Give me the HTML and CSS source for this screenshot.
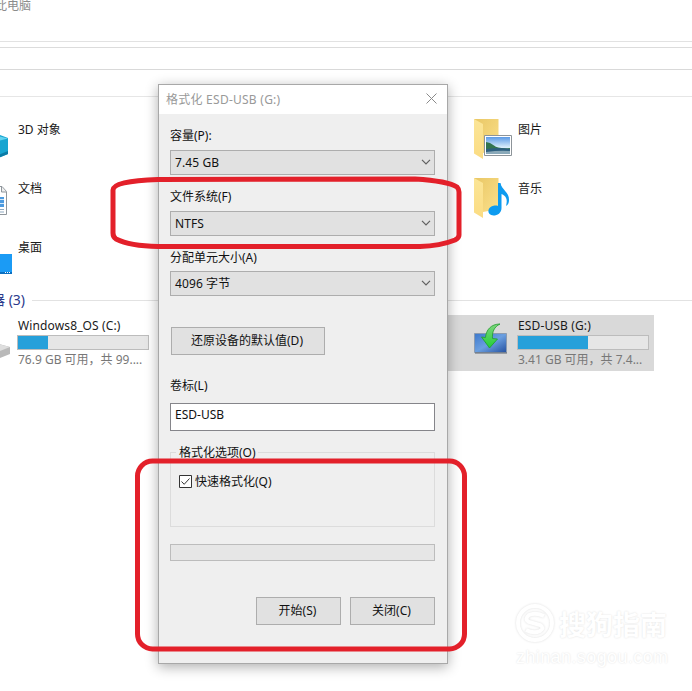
FILE: index.html
```html
<!DOCTYPE html>
<html lang="zh-CN">
<head>
    <meta charset="UTF-8">
    <meta name="viewport" content="width=device-width, initial-scale=1.0">
    <title>此电脑</title>
    <link rel="stylesheet" href="styles.css">
</head>
<body>

<div class="explorer">
    <header class="title-bar">此电脑</header>
    <div class="ribbon"></div>
    <div class="address-bar"></div>
    <div class="group-line"></div>

    <div class="tiles folders">
        <div class="tile">
            <svg class="icon" viewBox="0 0 38 42">
                <path d="M10 18 26 17 34 20 34 36 24 40 10 38z" fill="#17a5d1"/>
                <path d="M20 17 34 20.500 24 23 10 21z" fill="#63d3ef"/>
                <path d="M24 37 34 33 34 36 24 40z" fill="#0b7ba6"/>
            </svg>
            <span class="name">3D 对象</span>
        </div>
        <div class="tile">
            <svg class="icon" viewBox="0 0 38 42">
                <path d="M5.500 9.500H28l4.500 5V37.500h-27z" fill="#fff" stroke="#8f969c"/>
                <path d="M27.500 10v5h5" fill="#eee" stroke="#8f969c"/>
                <path d="M18 17.500h8M18 32.500h12M18 35h12" stroke="#8fa9c0"/>
                <path d="M18 20h12v10H18z" fill="#4d9be0"/>
                <path d="M18 22.500h12M18 26.500h12" stroke="#d5e9fa"/>
            </svg>
            <span class="name">文档</span>
        </div>
        <div class="tile">
            <svg class="icon" viewBox="0 0 38 42">
                <path d="M0 18h38v20H0z" fill="#1b9bf5"/>
                <path d="M0 36h38v2H0z" fill="#0a6fc0"/>
                <path d="M31 36.500h5" stroke="#fff" stroke-dasharray="1 1"/>
            </svg>
            <span class="name">桌面</span>
        </div>
        <div class="tile">
            <svg class="icon" viewBox="0 0 38 42">
                <path d="M0 1h24.500v31L9 35z" fill="url(#folderBack)"/>
                <path d="M0 1 9 6V41L0 35.500z" fill="url(#folderFront)"/>
                <path d="M10.500 17.500h27v20h-27z" fill="#fff" stroke="#8d9499"/>
                <path d="M12 19h24v17H12z" fill="url(#sky)"/>
                <path d="M12 24q4 0 8 3.500t16 2.500v2H12z" fill="#32744f"/>
                <path d="M12 31q14-2 24 0v5H12z" fill="#2d5f7e"/>
                <path d="M12 34q14-2 24-1v3H12z" fill="#8aa9b9"/>
            </svg>
            <span class="name">图片</span>
        </div>
        <div class="tile">
            <svg class="icon" viewBox="0 0 38 42">
                <path d="M0 1h24.500v31L9 35z" fill="url(#folderBack)"/>
                <path d="M0 1 9 6V41L0 35.500z" fill="url(#folderFront)"/>
                <path d="M24 6h2.500c1 7 9 9 8.500 17 0 3-1 5-3 6 2-7 0-10-4.500-12v14c0 5-4 7.500-8 7.500-7 0-7-9 1-10 2 0 3 0 3.500.5z" fill="#0d9bf0"/>
            </svg>
            <span class="name">音乐</span>
        </div>
    </div>

    <h2 class="group-title"><span>设备和驱动器 (3)</span></h2>

    <div class="tiles drives">
        <div class="tile">
            <svg class="icon" viewBox="0 0 38 42">
                <path d="M0 22 22 20 36 24 36 31 14 40 0 36z" fill="#b9b9b9"/>
                <path d="M0 22 20 20 36 24 16 32 0 28z" fill="#dedede"/>
            </svg>
            <div class="drive">
                <span class="name">Windows8_OS (C:)</span>
                <div class="usage"><div class="used" style="width: 23%"></div></div>
                <span class="free">76.9 GB 可用，共 99....</span>
            </div>
        </div>
        <div class="tile selected">
            <svg class="icon" viewBox="0 0 38 42">
                <path d="M.5 10.500h32v19H.5z" fill="url(#screen)" stroke="#8b9bb0"/>
                <path d="M1 30h32" stroke="#5c6470"/>
                <path d="M26 1C17 1 12 7 11.500 14.500L7.500 14 15.500 25 23.500 16 18.500 15.500C18 9 20 4 26 1z" fill="url(#arrow)" stroke="#1f9a2c" stroke-width=".8"/>
            </svg>
            <div class="drive">
                <span class="name">ESD-USB (G:)</span>
                <div class="usage"><div class="used" style="width: 54%"></div></div>
                <span class="free">3.41 GB 可用，共 7.4...</span>
            </div>
        </div>
    </div>
</div>

<div class="dialog">
    <div class="dialog-title">
        <span>格式化 ESD-USB (G:)</span>
        <svg class="close" viewBox="0 0 11 11"><path d="M.5.5l10 10M10.500.5l-10 10"/></svg>
    </div>
    <div class="dialog-body">
        <label>容量(P):</label>
        <div class="select"><span>7.45 GB</span><svg viewBox="0 0 10 6"><path d="M1 .8l4 4 4-4"/></svg></div>
        <label>文件系统(F)</label>
        <div class="select"><span>NTFS</span><svg viewBox="0 0 10 6"><path d="M1 .8l4 4 4-4"/></svg></div>
        <label>分配单元大小(A)</label>
        <div class="select"><span>4096 字节</span><svg viewBox="0 0 10 6"><path d="M1 .8l4 4 4-4"/></svg></div>
        <button class="btn restore">还原设备的默认值(D)</button>
        <label>卷标(L)</label>
        <div class="text-input">ESD-USB</div>
        <div class="options">
            <div class="legend">格式化选项(O)</div>
            <div class="check">
                <svg viewBox="0 0 13 13"><path d="M.5.5h12v12H.5z" fill="#fff"/><path d="M2.500 6.500l2.700 2.800 5.300-5.800" fill="none"/></svg>
                <span>快速格式化(Q)</span>
            </div>
        </div>
        <div class="progress"></div>
        <div class="actions">
            <button class="btn">开始(S)</button>
            <button class="btn">关闭(C)</button>
        </div>
    </div>
</div>

<!-- red marker strokes -->
<svg class="marks" viewBox="0 0 692 691">
    <path d="M113 190Q113 181 158 179.500L415 179Q448 181 457 187Q459 189 459 192V235Q459 238 455 240Q440 246 420 246.500H158Q130 246 116 239Q113 237 113 233z"/>
    <rect x="137.500" y="461" width="327" height="188" rx="15"/>
</svg>

<div class="watermark">
    <div class="brand">
        <svg viewBox="0 0 40 40">
            <circle cx="20" cy="20" r="17"/>
            <path d="M29 13q-9-4-15-1-5 4 0 7l11 3q5 3 0 6-6 3-14-1"/>
        </svg>
        <span>搜狗指南</span>
    </div>
    <div class="site">zhinan.sogou.com</div>
</div>

<svg class="defs">
    <defs>
        <linearGradient id="folderBack" x1="0" y1="0" x2="1" y2="1">
            <stop offset="0" stop-color="#e9c765"/><stop offset="1" stop-color="#fbe08b"/>
        </linearGradient>
        <linearGradient id="folderFront" x1="0" y1="0" x2="0" y2="1">
            <stop offset="0" stop-color="#fbe597"/><stop offset="1" stop-color="#fbdc83"/>
        </linearGradient>
        <linearGradient id="sky" x1="0" y1="0" x2="0" y2="1">
            <stop offset="0" stop-color="#5b9ae6"/><stop offset=".6" stop-color="#d8ecfa"/>
        </linearGradient>
        <linearGradient id="screen" x1="0" y1="0" x2="1" y2="1">
            <stop offset="0" stop-color="#3c78cc"/><stop offset=".5" stop-color="#6b9fe0"/><stop offset="1" stop-color="#2450a0"/>
        </linearGradient>
        <linearGradient id="arrow" x1="0" y1="0" x2="0" y2="1">
            <stop offset="0" stop-color="#7fd67f"/><stop offset="1" stop-color="#20cf35"/>
        </linearGradient>
    </defs>
</svg>

</body>
</html>
```
FILE: styles.css
```css
* {
    box-sizing: border-box;
}
body {
    margin: 0;
    height: 691px;
    position: relative;
    overflow: hidden;
    background-color: #fff;
    color: #1a1a1a;
    font-family: "Noto Sans", "Noto Sans CJK SC", sans-serif;
    font-size: 12px;
}
.explorer {
    width: 692px;
    overflow: hidden;
}
.title-bar {
    height: 42px;
    margin-left: -5px;
    line-height: 11px;
    color: #8c8c8c;
    border-bottom: 1px solid #e2e2e2;
}
.ribbon {
    height: 6px;
    border-bottom: 1px solid #dcdcdc;
}
.address-bar {
    height: 22px;
    border-bottom: 1px solid #d9d9d9;
}
.group-line {
    height: 27px;
    border-bottom: 1px solid #e6e6e6;
}
.tiles {
    display: grid;
    grid-template-columns: 214px 214px;
    column-gap: 286px;
    margin-left: -60px;
}
.folders {
    grid-template-rows: repeat(3, 59px);
    grid-auto-flow: column;
    padding-top: 12px;
}
.tile {
    display: flex;
    gap: 6px;
    padding: 9px 0 0 34px;
}
.icon {
    width: 38px;
    height: 42px;
    flex: none;
}
.name {
    line-height: 20px;
    white-space: nowrap;
}
.folders .name {
    line-height: 23px;
}
.group-title {
    display: flex;
    align-items: center;
    gap: 7px;
    height: 29px;
    margin: 0 0 0 -79px;
    font-size: 14px;
    font-weight: normal;
    color: #2b3a8c;
    white-space: nowrap;
}
.group-title span {
    padding-bottom: 4px;
}
.group-title::after {
    content: "";
    flex: 1;
    height: 1px;
    background-color: #e2e2e2;
}
.drives .tile {
    height: 56px;
    padding-top: 0;
}
.drives .icon {
    margin-top: 8px;
}
.selected {
    background-color: #d9d9d9;
}
.drive {
    width: 131px;
}
.drive .name,
.drive .free {
    display: block;
    height: 20px;
    line-height: 21px;
    white-space: nowrap;
}
.drive .name {
    letter-spacing: 0.13px;
}
.drive .free {
    color: #787878;
    line-height: 19px;
}
.usage {
    height: 15px;
    margin-left: -1px;
    border: 1px solid #bcbcbc;
    background-color: #e6e6e6;
}
.used {
    height: 100%;
    background-color: #26a0da;
}

/* format dialog */
.dialog {
    position: absolute;
    left: 158px;
    top: 84px;
    width: 290px;
    height: 580px;
    border: 1px solid #a8a8a8;
    background-color: #efefef;
    box-shadow: 0 3px 12px rgba(0, 0, 0, 0.32);
}
.dialog-title {
    display: flex;
    align-items: center;
    justify-content: space-between;
    height: 29px;
    padding: 0 10px 2px 7px;
    background-color: #fff;
    color: #999;
    letter-spacing: 0.25px;
}
.close {
    width: 11px;
    height: 11px;
    stroke: #8a8a8a;
    fill: none;
}
.dialog-body {
    padding: 11px 12px 0 11px;
    color: #111;
}
.dialog-body label {
    display: block;
    height: 20px;
    line-height: 21px;
    margin-bottom: 5px;
}
.select {
    display: flex;
    align-items: center;
    justify-content: space-between;
    height: 25px;
    margin-bottom: 11px;
    padding: 0 3px 1px 4px;
    border: 1px solid #adadad;
    background-color: #e1e1e1;
    letter-spacing: 0.1px;
}
.select:nth-of-type(3) {
    margin-top: -1px;
}
.select svg {
    width: 10px;
    height: 6px;
    fill: none;
    stroke: #606060;
    stroke-width: 1.2;
}
.btn {
    width: 85px;
    height: 28px;
    padding: 0 2px 2px 0;
    border: 1px solid #adadad;
    background-color: #e1e1e1;
    color: #111;
    font: inherit;
}
.restore {
    display: block;
    width: 154px;
    margin: 31px 0 20px 1px;
}
.text-input {
    height: 28px;
    margin-top: 8px;
    padding-left: 4px;
    border: 1px solid #85858a;
    background-color: #fff;
    line-height: 22px;
}
.options {
    height: 75px;
    margin-top: 21px;
    padding-left: 8px;
    border: 1px solid #dcdcdc;
}
.legend {
    width: 82px;
    height: 20px;
    margin: -11px 0 0 -3px;
    padding-left: 3px;
    line-height: 21px;
    background-color: #efefef;
}
.check {
    display: flex;
    align-items: center;
    gap: 3px;
    height: 20px;
    margin-top: 9px;
}
.check svg {
    width: 13px;
    height: 13px;
    stroke: #333;
}
.progress {
    height: 17px;
    margin-top: 17px;
    border: 1px solid #bcbcbc;
    background-color: #e6e6e6;
}
.actions {
    display: flex;
    justify-content: flex-end;
    gap: 9px;
    margin-top: 36px;
}
.marks {
    position: absolute;
    left: 0;
    top: 0;
    width: 692px;
    height: 691px;
    fill: none;
    stroke: #e3202a;
    stroke-width: 5;
}
.watermark {
    position: absolute;
    left: 515px;
    top: 602px;
    width: 160px;
    color: #fff;
    text-shadow: 0 0 2px #ddd;
}
.brand {
    display: flex;
    align-items: center;
    gap: 4px;
    height: 42px;
    font-size: 27px;
    font-weight: bold;
    white-space: nowrap;
}
.brand svg {
    width: 40px;
    height: 40px;
    fill: none;
    stroke: #fff;
    stroke-width: 4;
    filter: drop-shadow(0 0 1px #ddd);
}
.site {
    padding-left: 1px;
    font-family: "Liberation Sans", sans-serif;
    font-size: 18px;
    line-height: 26px;
    letter-spacing: 0.4px;
}
.defs {
    position: absolute;
    width: 0;
    height: 0;
}
```
